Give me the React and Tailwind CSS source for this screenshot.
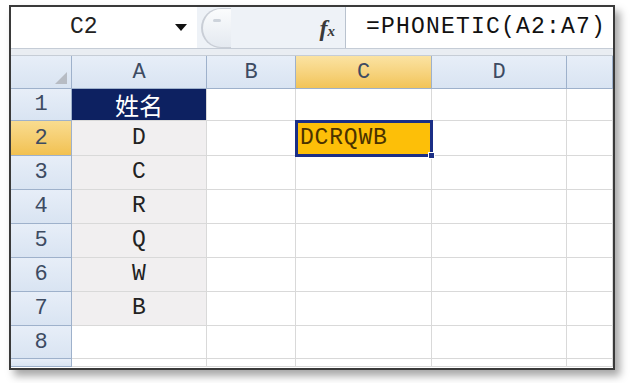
import React from "react";

const mono = { fontFamily: '"Liberation Mono", "DejaVu Sans Mono", monospace' };

const cols = ["A", "B", "C", "D", ""];
const names = ["D", "C", "R", "Q", "W", "B"];
const rowHeights = ["h-[32px]", "h-[35px]", "h-[34px]", "h-[34px]", "h-[34px]", "h-[34px]", "h-[34px]", "h-[33px]", "h-[8px]"];

function RowHead({ n, active, h }) {
  return (
    <div
      className={`${h} flex items-center justify-center border-r border-b border-[#9eb1cb] text-[22px] text-[#3d4b62] ${
        active ? "bg-gradient-to-b from-[#f9dc8f] to-[#f2c150]" : "bg-gradient-to-b from-[#e7eef8] to-[#d9e4f2]"
      }`}
      style={mono}
    >
      {n}
    </div>
  );
}

function Cell({ children, className = "", h }) {
  return (
    <div className={`${h} border-r border-b border-[#d9d9d9] flex items-center ${className}`} style={mono}>
      {children}
    </div>
  );
}

export default function App() {
  return (
    <div className="w-[641px] h-[383px] bg-white overflow-hidden pt-[5px] pl-[9px]">
      <div className="w-[606px] h-[365px] border-2 border-[#3a3a3a] bg-white shadow-[5px_6px_8px_rgba(0,0,0,0.35)] flex flex-col overflow-hidden">
        {/* formula bar */}
        <div className="h-[42px] flex bg-[#eef2f7] border-b border-[#c5ccd6] shrink-0">
          <div className="w-[186px] bg-white flex items-center pl-[59px] pr-[10px] text-[23px] text-[#222]" style={mono}>
            <span className="flex-1">C2</span>
            <span className="w-0 h-0 border-l-[6px] border-r-[6px] border-t-[7px] border-l-transparent border-r-transparent border-t-[#111]" />
          </div>
          <div className="flex-1 flex items-center relative">
            <div className="ml-[4px] w-[30px] h-[40px] rounded-l-full border-l-2 border-t border-b border-[#c9ced6] bg-gradient-to-b from-[#fbfcfd] to-[#e4e9f0] flex items-start justify-center pt-[10px]">
              <span className="w-[8px] h-[3px] rounded bg-[#cdd3db]" />
            </div>
            <span className="ml-auto mr-[10px] text-[24px] leading-none italic font-bold text-[#3a3a3a]" style={{ fontFamily: '"Liberation Serif", serif' }}>
              f<span className="text-[15px]">x</span>
            </span>
          </div>
          <div className="w-[268px] bg-white border-l border-[#b9c2ce] flex items-center pl-[20px] text-[23px] text-[#111] tracking-[1.2px]" style={mono}>
            =PHONETIC(A2:A7)
          </div>
        </div>
        <div className="h-[7px] bg-[#e9edf2] border-b border-[#c6cdd6] shrink-0" />

        {/* sheet */}
        <div className="grid grid-cols-[61px_135px_89px_136px_135px_1fr] bg-white">
          <div className="h-[33px] border-r border-b border-[#9eb1cb] bg-gradient-to-b from-[#e7eef8] to-[#d9e4f2] flex items-end justify-end p-[4px]">
            <svg width="12" height="12" viewBox="0 0 12 12">
              <path d="M12 0 L12 12 L0 12 Z" fill="#b7bcc4" />
            </svg>
          </div>
          {cols.map((c) => (
            <div
              key={c || "E"}
              className={`h-[33px] flex items-center justify-center border-r border-b border-[#9eb1cb] text-[22px] text-[#3d4b62] ${
                c === "C" ? "bg-gradient-to-b from-[#fbe3a2] to-[#f2c457]" : "bg-gradient-to-b from-[#e7eef8] to-[#d9e4f2]"
              }`}
              style={mono}
            >
              {c}
            </div>
          ))}

          {rowHeights.map((h, i) => {
            const r = i + 1;
            return (
              <React.Fragment key={r}>
                <RowHead n={r === 9 ? "" : r} active={r === 2} h={h} />
                {r === 1 ? (
                  <Cell h={h} className="justify-center bg-[#0d2161] text-white text-[24px]">
                    <span style={{ fontFamily: '"Noto Sans CJK SC", sans-serif' }}>姓名</span>
                  </Cell>
                ) : r <= 7 ? (
                  <Cell h={h} className="justify-center bg-[#f1eff0] text-[23px] text-[#222]">
                    {names[r - 2]}
                  </Cell>
                ) : (
                  <Cell h={h} />
                )}
                <Cell h={h} />
                {r === 2 ? (
                  <div className={`${h} relative border-r border-b border-[#d9d9d9]`}>
                    <div
                      className="absolute -left-[1px] -top-[1px] w-[138px] h-[37px] border-[3px] border-[#1b2f86] bg-[#fdbf08] flex items-center pl-[2px] text-[23px] text-[#4a3200] tracking-[0.8px]"
                      style={mono}
                    >
                      DCRQWB
                    </div>
                    <span className="absolute -right-[4px] -bottom-[4px] w-[7px] h-[7px] bg-[#1b2f86] border border-white" />
                  </div>
                ) : (
                  <Cell h={h} />
                )}
                <Cell h={h} />
                <Cell h={h} />
              </React.Fragment>
            );
          })}
        </div>
      </div>
    </div>
  );
}
